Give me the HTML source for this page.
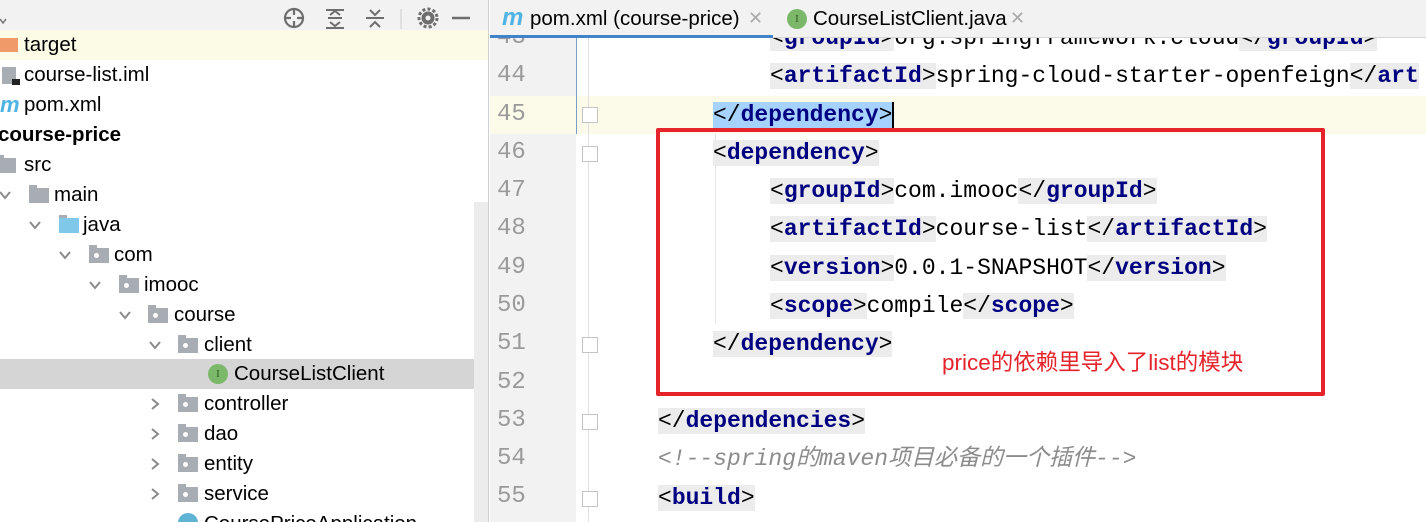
<!DOCTYPE html>
<html><head><meta charset="utf-8"><style>
*{margin:0;padding:0;box-sizing:border-box}
body{width:1426px;height:522px;overflow:hidden;background:#fff;position:relative;font-family:"Liberation Sans","Noto Sans CJK SC",sans-serif}
.abs{position:absolute}
#left{left:0;top:0;width:489px;height:522px;background:#fff;border-right:1px solid #d0d0d0;overflow:hidden}
.tb{left:0;top:0;width:489px;height:30px;background:#f2f2f2}
.row{position:absolute;left:0;width:489px;height:30px;font-size:20.5px;color:#000;line-height:30px;white-space:nowrap}
.fold{position:absolute;top:9px;width:14px;height:12px}
.fd{position:absolute;top:8px;width:20px;height:15px;background:#a8adb3}
.fd:before{content:"";position:absolute;left:0;top:-3px;width:8px;height:3px;background:#a8adb3}
.fd.pk:after{content:"";position:absolute;left:5px;top:5px;width:5px;height:5px;border-radius:50%;background:#fff}
#ed{left:490px;top:0;width:936px;height:522px;overflow:hidden}
.gut{left:0;top:38px;width:86px;height:484px;background:#f2f2f2}
.ln{position:absolute;left:7px;width:40px;font-family:"Liberation Mono",monospace;font-size:24px;color:#9a9a9a;line-height:38px}
.code{position:absolute;left:112px;font-family:"Liberation Mono",monospace;font-size:23px;line-height:30px;white-space:pre;color:#000}
.t{background:#ececec;color:#000}
.k{color:#000080;font-weight:bold}
.fm{position:absolute;left:92px;width:16px;height:16px;border:1px solid #c4c4c4;background:#fff}
</style></head><body>
<svg width="0" height="0" style="position:absolute"><defs>
<symbol id="dn" viewBox="0 0 14 12"><path d="M2 3l5 6 5-6" fill="none" stroke="#8a8a8a" stroke-width="2"/></symbol>
<symbol id="rt" viewBox="0 0 14 12"><path d="M4 1l6 5-6 5" fill="none" stroke="#8a8a8a" stroke-width="2"/></symbol>
</defs></svg>
<div id="left" class="abs">
 <div class="abs tb"></div>
 <svg class="abs" style="left:0;top:18px" width="8" height="8"><path d="M0 1l3 4 3-4" fill="none" stroke="#777" stroke-width="1.5"/></svg>
 <svg class="abs" style="left:282px;top:7px" width="190" height="24">
  <circle cx="12" cy="11" r="9" fill="none" stroke="#6e6e6e" stroke-width="2.2"/><path d="M12 2v6M12 14v6M3 11h6M15 11h6" stroke="#6e6e6e" stroke-width="2.2"/>
  <path d="M44 3h18M44 21h18M48 8l5-4 5 4M48 15l5 4 5-4M46 11h14" stroke="#6e6e6e" stroke-width="2" fill="none"/>
  <path d="M84 11h18M88 3l5 5 5-5M88 20l5-5 5 5" stroke="#6e6e6e" stroke-width="2" fill="none"/>
  <path d="M119 2v20" stroke="#ccc"/>
  <circle cx="146" cy="11" r="6.5" fill="#6e6e6e"/><circle cx="146" cy="11" r="9" fill="none" stroke="#6e6e6e" stroke-width="3" stroke-dasharray="3 2.2"/><circle cx="146" cy="11" r="2.5" fill="#f2f2f2"/>
  <path d="M170 11h18" stroke="#6e6e6e" stroke-width="2.4"/>
 </svg>
 <div class="row" style="top:30px;background:#fcfbe6"><div class="abs" style="left:0;top:8px;width:18px;height:14px;background:#f09a6a"></div><span class="abs" style="left:24px">target</span></div>
 <div class="row" style="top:60px"><div class="abs" style="left:2px;top:7px;width:14px;height:17px;background:#a8adb3"></div><div class="abs" style="left:12px;top:19px;width:8px;height:6px;background:#222"></div><span class="abs" style="left:24px">course-list.iml</span></div>
 <div class="row" style="top:90px"><span class="abs" style="left:0;color:#4fb3e3;font-weight:bold;font-style:italic;font-size:22px">m</span><span class="abs" style="left:24px">pom.xml</span></div>
 <div class="row" style="top:120px;font-weight:bold"><span class="abs" style="left:-2px">course-price</span></div>
 <div class="row" style="top:150px"><div class="fd" style="left:-4px"></div><span class="abs" style="left:24px">src</span></div>
 <div class="row" style="top:180px"><svg class="fold" style="left:-2px"><use href="#dn"/></svg><div class="fd" style="left:29px"></div><span class="abs" style="left:54px">main</span></div>
 <div class="row" style="top:210px"><svg class="fold" style="left:28px"><use href="#dn"/></svg><div class="fd" style="left:59px;background:#7fc8ea"></div><span class="abs" style="left:83px">java</span></div>
 <div class="row" style="top:240px"><svg class="fold" style="left:58px"><use href="#dn"/></svg><div class="fd pk" style="left:89px"></div><span class="abs" style="left:114px">com</span></div>
 <div class="row" style="top:270px"><svg class="fold" style="left:88px"><use href="#dn"/></svg><div class="fd pk" style="left:119px"></div><span class="abs" style="left:144px">imooc</span></div>
 <div class="row" style="top:300px"><svg class="fold" style="left:118px"><use href="#dn"/></svg><div class="fd pk" style="left:148px"></div><span class="abs" style="left:174px">course</span></div>
 <div class="row" style="top:330px"><svg class="fold" style="left:148px"><use href="#dn"/></svg><div class="fd pk" style="left:178px"></div><span class="abs" style="left:204px">client</span></div>
 <div class="row" style="top:359px;background:#d5d5d5"><div class="abs" style="left:208px;top:5px;width:20px;height:20px;border-radius:50%;background:#7cb86a;color:#2d5a22;font-size:11px;line-height:20px;text-align:center;font-family:'Liberation Serif',serif">I</div><span class="abs" style="left:234px">CourseListClient</span></div>
 <div class="row" style="top:389px"><svg class="fold" style="left:148px"><use href="#rt"/></svg><div class="fd pk" style="left:178px"></div><span class="abs" style="left:204px">controller</span></div>
 <div class="row" style="top:419px"><svg class="fold" style="left:148px"><use href="#rt"/></svg><div class="fd pk" style="left:178px"></div><span class="abs" style="left:204px">dao</span></div>
 <div class="row" style="top:449px"><svg class="fold" style="left:148px"><use href="#rt"/></svg><div class="fd pk" style="left:178px"></div><span class="abs" style="left:204px">entity</span></div>
 <div class="row" style="top:479px"><svg class="fold" style="left:148px"><use href="#rt"/></svg><div class="fd pk" style="left:178px"></div><span class="abs" style="left:204px">service</span></div>
 <div class="row" style="top:509px"><div class="abs" style="left:178px;top:4px;width:20px;height:20px;border-radius:50%;background:#5fb4d6"></div><span class="abs" style="left:204px">CoursePriceApplication</span></div>
 <div class="abs" style="left:474px;top:202px;width:14px;height:320px;background:#ececec"></div>
</div>
<div id="ed" class="abs">
 <div class="abs gut"></div>
 <div class="abs" style="left:0;top:96px;width:936px;height:38px;background:#fcfbe9"></div>
 <div class="abs" style="left:86px;top:38px;width:1px;height:96px;background:#7a9fc7"></div>
 <div class="abs" style="left:98px;top:38px;width:1px;height:484px;background:#e0e0e0"></div>
 <div class="abs" style="left:225px;top:134px;width:1px;height:190px;background:#e6e6e6"></div>
 <div style="position:absolute;left:0;top:19px">
  <div class="ln" style="top:0">43</div><div class="ln" style="top:38px">44</div><div class="ln" style="top:77px">45</div><div class="ln" style="top:115px">46</div><div class="ln" style="top:153px">47</div><div class="ln" style="top:191px">48</div><div class="ln" style="top:230px">49</div><div class="ln" style="top:268px">50</div><div class="ln" style="top:306px">51</div><div class="ln" style="top:345px">52</div><div class="ln" style="top:383px">53</div><div class="ln" style="top:421px">54</div><div class="ln" style="top:459px">55</div>
 </div>
 <div class="fm" style="top:107px"></div><div class="fm" style="top:146px"></div><div class="fm" style="top:337px"></div><div class="fm" style="top:414px"></div><div class="fm" style="top:491px"></div>
 <div class="code" style="top:23px;left:280px"><span class="t">&lt;<span class="k">groupId</span>&gt;</span>org.springframework.cloud<span class="t">&lt;/<span class="k">groupId</span>&gt;</span></div>
 <div class="code" style="top:61px;left:280px"><span class="t">&lt;<span class="k">artifactId</span>&gt;</span>spring-cloud-starter-openfeign<span class="t">&lt;/<span class="k">art</span></span></div>
 <div class="code" style="top:100px;left:223px"><span style="background:#a6d2ff">&lt;/<span class="k">dependency</span>&gt;</span><span style="border-left:2px solid #000"></span></div>
 <div class="code" style="top:138px;left:223px"><span class="t">&lt;<span class="k">dependency</span>&gt;</span></div>
 <div class="code" style="top:176px;left:280px"><span class="t">&lt;<span class="k">groupId</span>&gt;</span>com.imooc<span class="t">&lt;/<span class="k">groupId</span>&gt;</span></div>
 <div class="code" style="top:214px;left:280px"><span class="t">&lt;<span class="k">artifactId</span>&gt;</span>course-list<span class="t">&lt;/<span class="k">artifactId</span>&gt;</span></div>
 <div class="code" style="top:253px;left:280px"><span class="t">&lt;<span class="k">version</span>&gt;</span>0.0.1-SNAPSHOT<span class="t">&lt;/<span class="k">version</span>&gt;</span></div>
 <div class="code" style="top:291px;left:280px"><span class="t">&lt;<span class="k">scope</span>&gt;</span>compile<span class="t">&lt;/<span class="k">scope</span>&gt;</span></div>
 <div class="code" style="top:329px;left:223px"><span class="t">&lt;/<span class="k">dependency</span>&gt;</span></div>
 <div class="code" style="top:406px;left:168px"><span class="t">&lt;/<span class="k">dependencies</span>&gt;</span></div>
 <div class="code" style="top:444px;left:168px;color:#8c8c8c;font-style:italic;font-family:'Liberation Mono','Noto Sans CJK SC',monospace">&lt;!--spring的maven项目必备的一个插件--&gt;</div>
 <div class="code" style="top:483px;left:168px"><span class="t">&lt;<span class="k">build</span>&gt;</span></div>
 <div class="abs" style="left:166px;top:128px;width:669px;height:268px;border:4px solid #e5232b;border-radius:2px"></div>
 <span class="abs" style="left:452px;top:345px;color:#e5232b;font-size:22.5px;font-family:'Liberation Sans','Noto Sans CJK SC',sans-serif">price的依赖里导入了list的模块</span>
 <div class="abs" style="left:0;top:0;width:936px;height:38px;background:#f2f2f2;border-bottom:1px solid #d6d6d6"></div>
 <div class="abs" style="left:0;top:35px;width:283px;height:3px;background:#4083c9"></div>
 <span class="abs" style="left:12px;top:4px;color:#4fb3e3;font-weight:bold;font-style:italic;font-size:24px">m</span>
 <span class="abs" style="left:40px;top:7px;font-size:20.5px">pom.xml (course-price)</span>
 <span class="abs" style="left:258px;top:8px;font-size:18px;color:#aaa">✕</span>
 <div class="abs" style="left:297px;top:9px;width:20px;height:20px;border-radius:50%;background:#7cb86a;color:#2d5a22;font-size:11px;line-height:20px;text-align:center;font-family:'Liberation Serif',serif">I</div>
 <span class="abs" style="left:323px;top:7px;font-size:20.5px">CourseListClient.java</span>
 <span class="abs" style="left:520px;top:8px;font-size:18px;color:#aaa">✕</span>
</div>
</body></html>
